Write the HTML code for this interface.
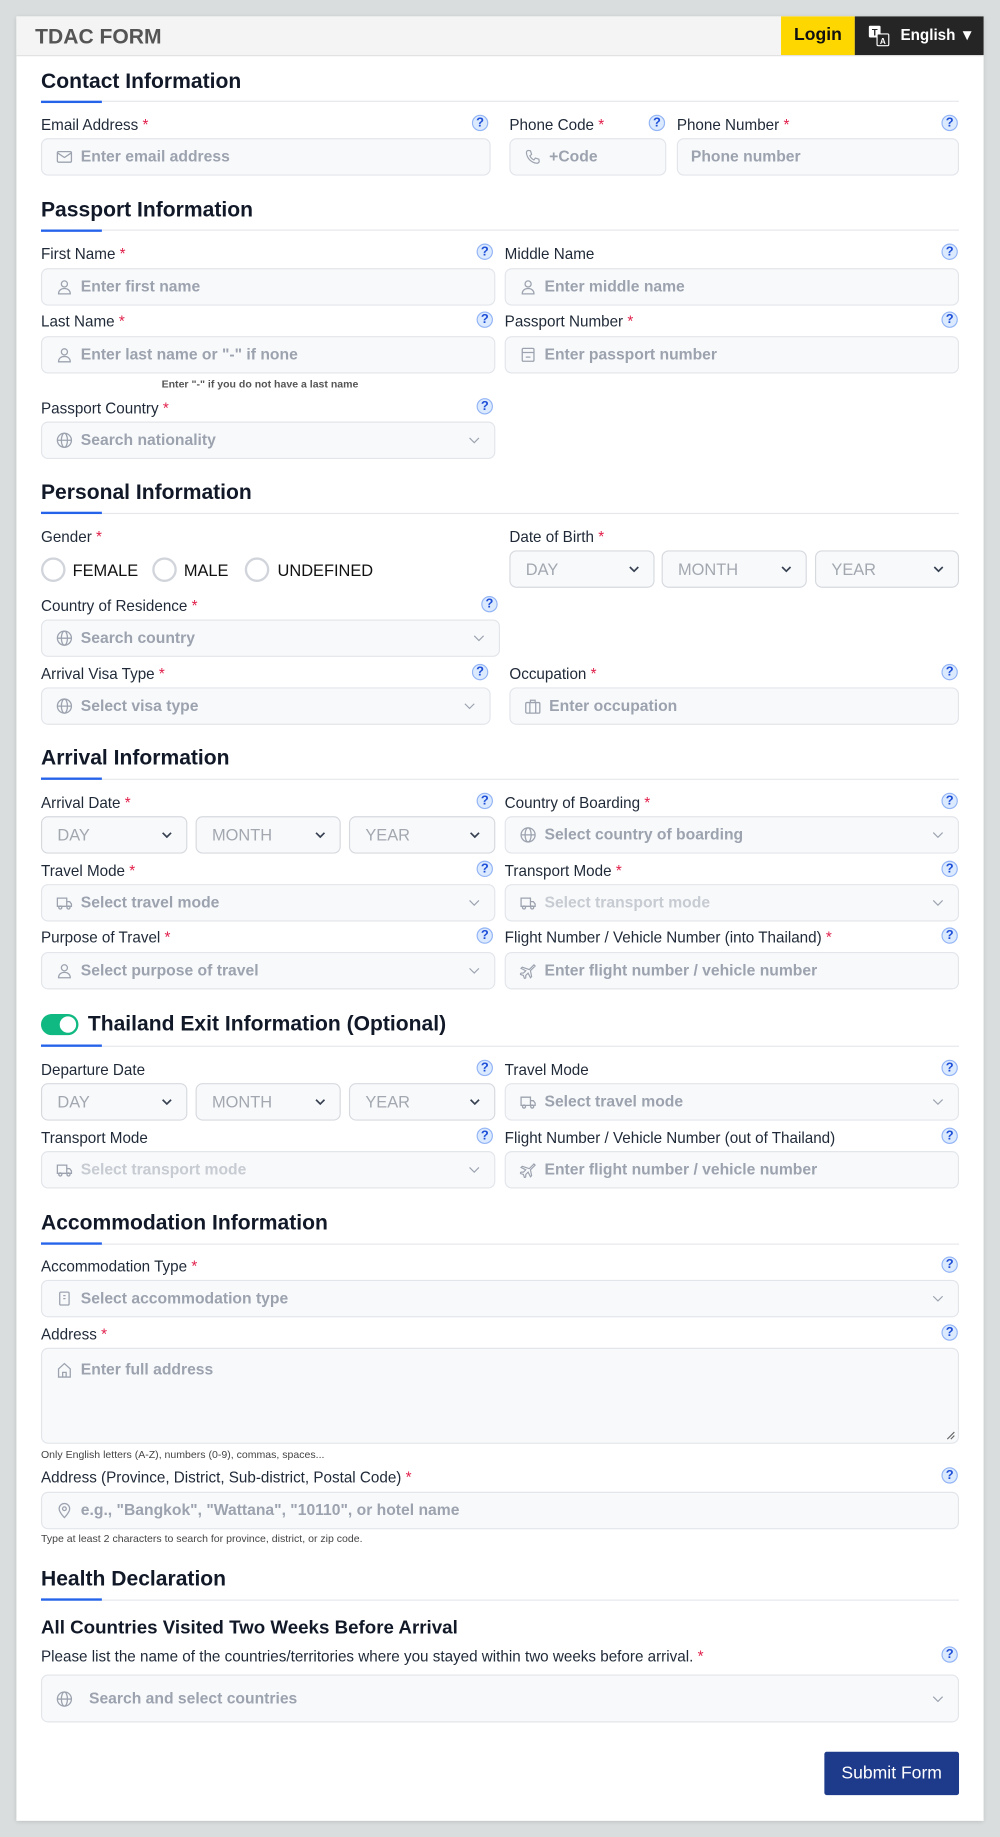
<!DOCTYPE html>
<html><head><meta charset="utf-8">
<style>
html,body{margin:0;padding:0;background:#d9dddd;width:1000px;height:1837px;overflow:hidden}
#s{position:absolute;left:0;top:0;width:854px;height:1569px;transform:scale(1.17096);transform-origin:0 0;font-family:"Liberation Sans",sans-serif}
.a{position:absolute}
.card{left:14px;top:14px;width:826px;height:1541px;background:#fff;box-shadow:0 1px 4px rgba(0,0,0,.15)}
.hd{left:14px;top:14px;width:826px;height:33px;background:#f4f4f4;border-bottom:1px solid #e2e2e2}
.t{position:absolute;font-size:18px;font-weight:bold;color:#111827;line-height:22px;left:35px;margin-top:1px}
.ln{position:absolute;left:35px;width:784px;height:1px;background:#e5e7eb}
.bl{position:absolute;left:35px;width:52px;height:2px;background:#2563eb}
.lb{position:absolute;font-size:13px;color:#1f2937;line-height:16px;white-space:nowrap}
.lb b{color:#e11d48;font-weight:normal}
.in{position:absolute;height:32px;background:#f8f9fb;border:1px solid #e2e5ea;border-radius:6px;box-sizing:border-box;font-size:13.4px;font-weight:bold;color:#9ca3af;line-height:30px;padding-left:33px;white-space:nowrap}
.in.d{color:#c7cbd2}
.in svg.i{position:absolute;left:12px;top:8px}
.ch{position:absolute;right:12px;top:9px}
.sel{position:absolute;height:32px;background:#f8f9fb;border:1px solid #d6d9de;border-radius:6px;box-sizing:border-box;font-size:14px;color:#a3a8b0;line-height:30px;padding-left:13px}
.sel svg{position:absolute;right:12px;top:12px}
.q{position:absolute;width:14px;height:14px;border-radius:50%;background:#dbeafe;border:1px solid #93b4f5;box-sizing:border-box;font-size:11px;font-weight:bold;color:#1d4ed8;text-align:center;line-height:13px}
.hint{position:absolute;font-size:9px;color:#444;line-height:11px;white-space:nowrap}
.rad{position:absolute;top:476px;width:21px;height:21px;border:2px solid #d1d5db;border-radius:50%;box-sizing:border-box;background:#fff}
.rl{position:absolute;top:479px;font-size:14px;color:#111;line-height:16px}
</style></head><body>
<div id="s">
<svg width="0" height="0" style="position:absolute">
<defs>
<symbol id="chv" viewBox="0 0 10 6"><path d="M1 1l4 4 4-4" fill="none" stroke="#9ca3af" stroke-width="1"/></symbol>
<symbol id="chd" viewBox="0 0 10 6"><path d="M1 1l4 4 4-4" fill="none" stroke="#374151" stroke-width="1.6"/></symbol>
<symbol id="glb" viewBox="0 0 14 14"><g fill="none" stroke="#9ca3af" stroke-width="1.1"><circle cx="7" cy="7" r="6"/><ellipse cx="7" cy="7" rx="2.6" ry="6"/><path d="M1 7h12"/></g></symbol>
<symbol id="usr" viewBox="0 0 14 14"><g fill="none" stroke="#9ca3af" stroke-width="1.1"><circle cx="7" cy="4.5" r="2.6"/><path d="M2 13c0-3 2.2-4.6 5-4.6s5 1.6 5 4.6z"/></g></symbol>
<symbol id="trk" viewBox="0 0 14 14"><g fill="none" stroke="#9ca3af" stroke-width="1.1"><path d="M1 3h8v7H1zM9 6h2.5l1.5 2v2H9"/><circle cx="3.5" cy="11" r="1.3"/><circle cx="10.5" cy="11" r="1.3"/></g></symbol>
<symbol id="pln" viewBox="0 0 14 14"><path d="M8 6l4-4 1 1-4 4 1 5-1 1-2-4-2 2v2l-1 1-1-3-3-1 1-1h2l2-2-4-2 1-1z" fill="none" stroke="#9ca3af" stroke-width="1"/></symbol>
</defs></svg>

<div class="a card"></div>
<div class="a hd"></div>
<div class="a" style="left:30px;top:20px;font-size:18px;font-weight:bold;color:#555;line-height:22px">TDAC FORM</div>
<div class="a" style="left:667px;top:14px;width:63px;height:33px;background:#fed700;font-size:15px;font-weight:bold;color:#111;text-align:center;line-height:32px">Login</div>
<div class="a" style="left:730px;top:14px;width:110px;height:33px;background:#252525"></div>
<svg class="a" style="left:741px;top:21px" width="19" height="19" viewBox="0 0 19 19"><rect x="1" y="1" width="10" height="10" rx="1" fill="#fff"/><text x="6" y="9.5" font-size="8" font-weight="bold" text-anchor="middle" fill="#252525" font-family="Liberation Sans">T</text><rect x="8" y="8" width="10" height="10" rx="1" fill="#252525" stroke="#fff"/><text x="13" y="16.5" font-size="7" font-weight="bold" text-anchor="middle" fill="#fff" font-family="Liberation Sans">A</text></svg>
<div class="a" style="left:769px;top:22px;font-size:13px;font-weight:bold;color:#fff;line-height:16px">English ▼</div>

<!-- Contact -->
<div class="t" style="top:57px">Contact Information</div>
<div class="ln" style="top:86px"></div><div class="bl" style="top:86px"></div>
<div class="lb" style="left:35px;top:99px">Email Address <b>*</b></div><div class="q" style="left:403px;top:98px">?</div>
<div class="lb" style="left:435px;top:99px">Phone Code <b>*</b></div><div class="q" style="left:554px;top:98px">?</div>
<div class="lb" style="left:578px;top:99px">Phone Number <b>*</b></div><div class="q" style="left:804px;top:98px">?</div>
<div class="in" style="left:35px;top:118px;width:384px"><svg class="i" width="14" height="14" viewBox="0 0 14 14"><g fill="none" stroke="#9ca3af" stroke-width="1.1"><rect x="1" y="2.5" width="12" height="9" rx="1"/><path d="M1 3.5l6 4 6-4"/></g></svg>Enter email address</div>
<div class="in" style="left:435px;top:118px;width:134px"><svg class="i" width="14" height="14" viewBox="0 0 14 14"><path d="M3 1.5l2 .3 1 3-1.5 1.2c.8 1.7 2 2.9 3.5 3.6L9.2 8l3 1 .3 2c-.3 1-1.3 1.5-2.3 1.4C5.7 11.8 2.2 8.3 1.6 3.8 1.5 2.8 2 1.8 3 1.5z" fill="none" stroke="#9ca3af" stroke-width="1"/></svg>+Code</div>
<div class="in" style="left:578px;top:118px;width:241px;padding-left:11px">Phone number</div>

<!-- Passport -->
<div class="t" style="top:167px">Passport Information</div>
<div class="ln" style="top:196px"></div><div class="bl" style="top:196px"></div>
<div class="lb" style="left:35px;top:209px">First Name <b>*</b></div><div class="q" style="left:407px;top:208px">?</div>
<div class="lb" style="left:431px;top:209px">Middle Name</div><div class="q" style="left:804px;top:208px">?</div>
<div class="in" style="left:35px;top:229px;width:388px"><svg class="i" width="14" height="14"><use href="#usr"/></svg>Enter first name</div>
<div class="in" style="left:431px;top:229px;width:388px"><svg class="i" width="14" height="14"><use href="#usr"/></svg>Enter middle name</div>
<div class="lb" style="left:35px;top:267px">Last Name <b>*</b></div><div class="q" style="left:407px;top:266px">?</div>
<div class="lb" style="left:431px;top:267px">Passport Number <b>*</b></div><div class="q" style="left:804px;top:266px">?</div>
<div class="in" style="left:35px;top:287px;width:388px"><svg class="i" width="14" height="14"><use href="#usr"/></svg>Enter last name or "-" if none</div>
<div class="in" style="left:431px;top:287px;width:388px"><svg class="i" width="14" height="14" viewBox="0 0 14 14"><g fill="none" stroke="#9ca3af" stroke-width="1.1"><rect x="2" y="1.5" width="10" height="11" rx="1"/><path d="M2 5h10M5 9h4"/></g></svg>Enter passport number</div>
<div class="hint" style="left:138px;top:323px;font-weight:bold;color:#555">Enter "-" if you do not have a last name</div>
<div class="lb" style="left:35px;top:341px">Passport Country <b>*</b></div><div class="q" style="left:407px;top:340px">?</div>
<div class="in" style="left:35px;top:360px;width:388px"><svg class="i" width="14" height="14"><use href="#glb"/></svg>Search nationality<svg class="ch" width="10" height="6" style="top:12px"><use href="#chv"/></svg></div>

<!-- Personal -->
<div class="t" style="top:408px">Personal Information</div>
<div class="ln" style="top:438px"></div><div class="bl" style="top:437px"></div>
<div class="lb" style="left:35px;top:451px">Gender <b>*</b></div>
<div class="lb" style="left:435px;top:451px">Date of Birth <b>*</b></div>
<div class="rad" style="left:35px"></div><div class="rl" style="left:62px">FEMALE</div>
<div class="rad" style="left:130px"></div><div class="rl" style="left:157px">MALE</div>
<div class="rad" style="left:209px"></div><div class="rl" style="left:237px">UNDEFINED</div>
<div class="sel" style="left:435px;top:470px;width:124px">DAY<svg width="9" height="6"><use href="#chd"/></svg></div>
<div class="sel" style="left:565px;top:470px;width:124px">MONTH<svg width="9" height="6"><use href="#chd"/></svg></div>
<div class="sel" style="left:696px;top:470px;width:123px">YEAR<svg width="9" height="6"><use href="#chd"/></svg></div>
<div class="lb" style="left:35px;top:510px">Country of Residence <b>*</b></div><div class="q" style="left:411px;top:509px">?</div>
<div class="in" style="left:35px;top:529px;width:392px"><svg class="i" width="14" height="14"><use href="#glb"/></svg>Search country<svg class="ch" width="10" height="6" style="top:12px"><use href="#chv"/></svg></div>
<div class="lb" style="left:35px;top:568px">Arrival Visa Type <b>*</b></div><div class="q" style="left:403px;top:567px">?</div>
<div class="lb" style="left:435px;top:568px">Occupation <b>*</b></div><div class="q" style="left:804px;top:567px">?</div>
<div class="in" style="left:35px;top:587px;width:384px"><svg class="i" width="14" height="14"><use href="#glb"/></svg>Select visa type<svg class="ch" width="10" height="6" style="top:12px"><use href="#chv"/></svg></div>
<div class="in" style="left:435px;top:587px;width:384px"><svg class="i" width="14" height="14" viewBox="0 0 14 14"><g fill="none" stroke="#9ca3af" stroke-width="1.1"><rect x="1" y="4" width="12" height="9" rx="1"/><path d="M5 4V2h4v2M4.5 4v9M9.5 4v9"/></g></svg>Enter occupation</div>

<!-- Arrival -->
<div class="t" style="top:635px">Arrival Information</div>
<div class="ln" style="top:665px"></div><div class="bl" style="top:664px"></div>
<div class="lb" style="left:35px;top:678px">Arrival Date <b>*</b></div><div class="q" style="left:407px;top:677px">?</div>
<div class="lb" style="left:431px;top:678px">Country of Boarding <b>*</b></div><div class="q" style="left:804px;top:677px">?</div>
<div class="sel" style="left:35px;top:697px;width:125px">DAY<svg width="9" height="6"><use href="#chd"/></svg></div>
<div class="sel" style="left:167px;top:697px;width:124px">MONTH<svg width="9" height="6"><use href="#chd"/></svg></div>
<div class="sel" style="left:298px;top:697px;width:125px">YEAR<svg width="9" height="6"><use href="#chd"/></svg></div>
<div class="in" style="left:431px;top:697px;width:388px"><svg class="i" width="14" height="14"><use href="#glb"/></svg>Select country of boarding<svg class="ch" width="10" height="6" style="top:12px"><use href="#chv"/></svg></div>
<div class="lb" style="left:35px;top:736px">Travel Mode <b>*</b></div><div class="q" style="left:407px;top:735px">?</div>
<div class="lb" style="left:431px;top:736px">Transport Mode <b>*</b></div><div class="q" style="left:804px;top:735px">?</div>
<div class="in" style="left:35px;top:755px;width:388px"><svg class="i" width="14" height="14"><use href="#trk"/></svg>Select travel mode<svg class="ch" width="10" height="6" style="top:12px"><use href="#chv"/></svg></div>
<div class="in d" style="left:431px;top:755px;width:388px"><svg class="i" width="14" height="14"><use href="#trk"/></svg>Select transport mode<svg class="ch" width="10" height="6" style="top:12px"><use href="#chv"/></svg></div>
<div class="lb" style="left:35px;top:793px">Purpose of Travel <b>*</b></div><div class="q" style="left:407px;top:792px">?</div>
<div class="lb" style="left:431px;top:793px">Flight Number / Vehicle Number (into Thailand) <b>*</b></div><div class="q" style="left:804px;top:792px">?</div>
<div class="in" style="left:35px;top:813px;width:388px"><svg class="i" width="14" height="14"><use href="#usr"/></svg>Select purpose of travel<svg class="ch" width="10" height="6" style="top:12px"><use href="#chv"/></svg></div>
<div class="in" style="left:431px;top:813px;width:388px"><svg class="i" width="14" height="14"><use href="#pln"/></svg>Enter flight number / vehicle number</div>

<!-- Exit -->
<div class="a" style="left:35px;top:866px;width:32px;height:18px;border-radius:9px;background:#10b981"></div>
<div class="a" style="left:51px;top:868px;width:14px;height:14px;border-radius:50%;background:#fff"></div>
<div class="t" style="top:862px;left:75px">Thailand Exit Information (Optional)</div>
<div class="ln" style="top:893px"></div><div class="bl" style="top:892px"></div>
<div class="lb" style="left:35px;top:906px">Departure Date</div><div class="q" style="left:407px;top:905px">?</div>
<div class="lb" style="left:431px;top:906px">Travel Mode</div><div class="q" style="left:804px;top:905px">?</div>
<div class="sel" style="left:35px;top:925px;width:125px">DAY<svg width="9" height="6"><use href="#chd"/></svg></div>
<div class="sel" style="left:167px;top:925px;width:124px">MONTH<svg width="9" height="6"><use href="#chd"/></svg></div>
<div class="sel" style="left:298px;top:925px;width:125px">YEAR<svg width="9" height="6"><use href="#chd"/></svg></div>
<div class="in" style="left:431px;top:925px;width:388px"><svg class="i" width="14" height="14"><use href="#trk"/></svg>Select travel mode<svg class="ch" width="10" height="6" style="top:12px"><use href="#chv"/></svg></div>
<div class="lb" style="left:35px;top:964px">Transport Mode</div><div class="q" style="left:407px;top:963px">?</div>
<div class="lb" style="left:431px;top:964px">Flight Number / Vehicle Number (out of Thailand)</div><div class="q" style="left:804px;top:963px">?</div>
<div class="in d" style="left:35px;top:983px;width:388px"><svg class="i" width="14" height="14"><use href="#trk"/></svg>Select transport mode<svg class="ch" width="10" height="6" style="top:12px"><use href="#chv"/></svg></div>
<div class="in" style="left:431px;top:983px;width:388px"><svg class="i" width="14" height="14"><use href="#pln"/></svg>Enter flight number / vehicle number</div>

<!-- Accommodation -->
<div class="t" style="top:1032px">Accommodation Information</div>
<div class="ln" style="top:1062px"></div><div class="bl" style="top:1061px"></div>
<div class="lb" style="left:35px;top:1074px">Accommodation Type <b>*</b></div><div class="q" style="left:804px;top:1073px">?</div>
<div class="in" style="left:35px;top:1093px;width:784px"><svg class="i" width="14" height="14" viewBox="0 0 14 14"><g fill="none" stroke="#9ca3af" stroke-width="1.1"><rect x="3" y="1.5" width="8" height="11" rx="1"/><path d="M6 4.5h2M6 7h2"/></g></svg>Select accommodation type<svg class="ch" width="10" height="6" style="top:12px"><use href="#chv"/></svg></div>
<div class="lb" style="left:35px;top:1132px">Address <b>*</b></div><div class="q" style="left:804px;top:1131px">?</div>
<div class="in" style="left:35px;top:1151px;width:784px;height:82px;line-height:36px"><svg class="i" width="14" height="14" viewBox="0 0 14 14" style="top:11px"><path d="M2 13V6l5-4.5L12 6v7zM5.5 13V9h3v4" fill="none" stroke="#9ca3af" stroke-width="1.1"/></svg>Enter full address<svg class="a" style="right:2px;bottom:2px" width="8" height="8"><path d="M7 1L1 7M7 4L4 7" stroke="#666" stroke-width="1"/></svg></div>
<div class="hint" style="left:35px;top:1237px">Only English letters (A-Z), numbers (0-9), commas, spaces...</div>
<div class="lb" style="left:35px;top:1254px">Address (Province, District, Sub-district, Postal Code) <b>*</b></div><div class="q" style="left:804px;top:1253px">?</div>
<div class="in" style="left:35px;top:1274px;width:784px"><svg class="i" width="14" height="14" viewBox="0 0 14 14"><g fill="none" stroke="#9ca3af" stroke-width="1.1"><path d="M7 13s-4.5-4.5-4.5-7.5a4.5 4.5 0 019 0C11.5 8.5 7 13 7 13z"/><circle cx="7" cy="5.5" r="1.6"/></g></svg>e.g., "Bangkok", "Wattana", "10110", or hotel name</div>
<div class="hint" style="left:35px;top:1309px">Type at least 2 characters to search for province, district, or zip code.</div>

<!-- Health -->
<div class="t" style="top:1336px">Health Declaration</div>
<div class="ln" style="top:1366px"></div><div class="bl" style="top:1365px"></div>
<div class="a" style="left:35px;top:1381px;font-size:16px;font-weight:bold;color:#111827;line-height:19px">All Countries Visited Two Weeks Before Arrival</div>
<div class="lb" style="left:35px;top:1407px">Please list the name of the countries/territories where you stayed within two weeks before arrival. <b>*</b></div><div class="q" style="left:804px;top:1406px">?</div>
<div class="in" style="left:35px;top:1430px;width:784px;height:41px;line-height:39px;padding-left:40px"><svg class="i" width="14" height="14" style="top:13px"><use href="#glb"/></svg>Search and select countries<svg class="ch" width="10" height="6" style="top:17px"><use href="#chv"/></svg></div>

<div class="a" style="left:704px;top:1496px;width:115px;height:37px;background:#1e3a8a;border-radius:2px;color:#fff;font-size:15px;text-align:center;line-height:37px">Submit Form</div>
</div>
</body></html>
